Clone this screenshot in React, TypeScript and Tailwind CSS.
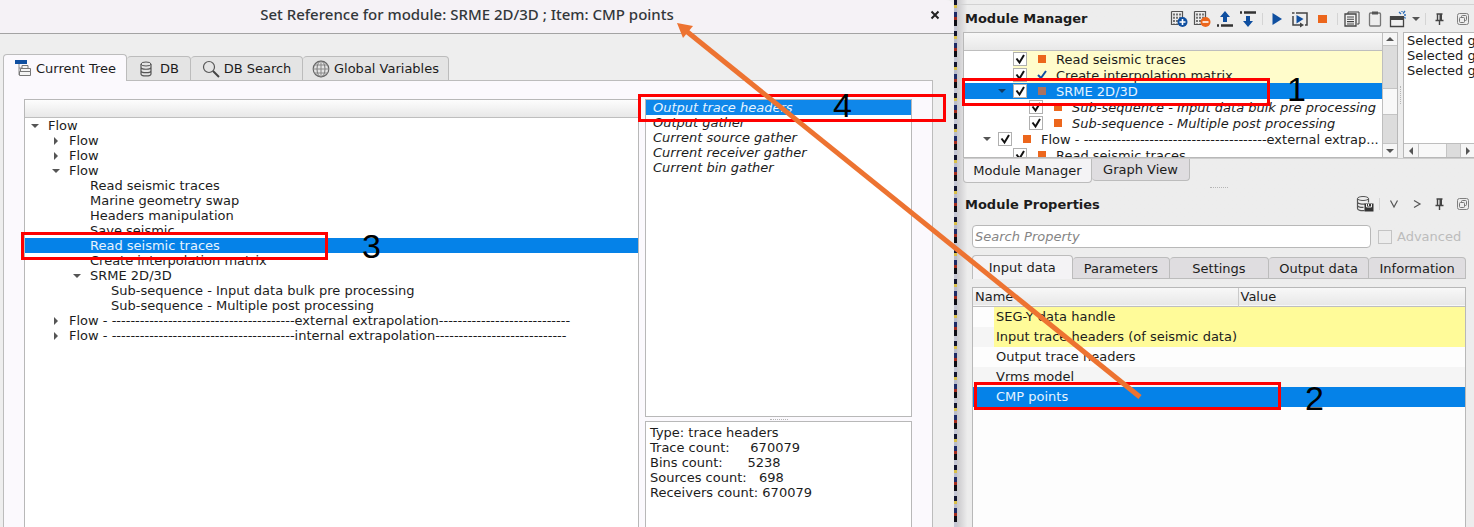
import type { ReactNode } from 'react';
import clsx from 'clsx';

interface TreeRow {
  label: string;
  depth: number;
  arrow?: 'open' | 'closed';
  selected?: boolean;
}

interface ModuleRow {
  label: string;
  depth: number;
  open?: boolean;
  italic?: boolean;
  status?: 'square' | 'check';
  tone?: 'yellow' | 'selected';
}

const EXTERNAL = 'Flow - ' + '-'.repeat(39) + 'external extrapolation' + '-'.repeat(28);
const INTERNAL = 'Flow - ' + '-'.repeat(39) + 'internal extrapolation' + '-'.repeat(28);

const FLOW_ROWS: TreeRow[] = [
  { label: 'Flow', depth: 0, arrow: 'open' },
  { label: 'Flow', depth: 1, arrow: 'closed' },
  { label: 'Flow', depth: 1, arrow: 'closed' },
  { label: 'Flow', depth: 1, arrow: 'open' },
  { label: 'Read seismic traces', depth: 2 },
  { label: 'Marine geometry swap', depth: 2 },
  { label: 'Headers manipulation', depth: 2 },
  { label: 'Save seismic', depth: 2 },
  { label: 'Read seismic traces', depth: 2, selected: true },
  { label: 'Create interpolation matrix', depth: 2 },
  { label: 'SRME 2D/3D', depth: 2, arrow: 'open' },
  { label: 'Sub-sequence - Input data bulk pre processing', depth: 3 },
  { label: 'Sub-sequence - Multiple post processing', depth: 3 },
  { label: EXTERNAL, depth: 1, arrow: 'closed' },
  { label: INTERNAL, depth: 1, arrow: 'closed' },
];

const OUTPUTS = [
  'Output trace headers',
  'Output gather',
  'Current source gather',
  'Current receiver gather',
  'Current bin gather',
];

const MODULE_ROWS: ModuleRow[] = [
  { label: 'Read seismic traces', depth: 1, tone: 'yellow' },
  { label: 'Create interpolation matrix', depth: 1, tone: 'yellow', status: 'check' },
  { label: 'SRME 2D/3D', depth: 1, open: true, tone: 'selected' },
  { label: 'Sub-sequence - Input data bulk pre processing', depth: 2, italic: true },
  { label: 'Sub-sequence - Multiple post processing', depth: 2, italic: true },
  { label: 'Flow - ' + '-'.repeat(39) + 'external extrap...', depth: 0, open: true },
  { label: 'Read seismic traces', depth: 1 },
];

const PROPERTIES = [
  { name: 'SEG-Y data handle', row: 'bg-[#fdfdfd]', cell: 'bg-[#fffb99]' },
  { name: 'Input trace headers (of seismic data)', row: 'bg-[#f5f5f5]', cell: 'bg-[#fffb99]' },
  { name: 'Output trace headers', row: 'bg-[#fdfdfd]', cell: '' },
  { name: 'Vrms model', row: 'bg-[#f5f5f5]', cell: '' },
  { name: 'CMP points', row: 'bg-[#0582e8] text-[#e6f4ff]', cell: '' },
];

const FLOW_INDENT = ['pl-1', 'pl-[25px]', 'pl-[46px]', 'pl-[67px]'];
const MODULE_INDENT = ['w-[15px]', 'w-[30px]', 'w-[46px]'];

function Arrow({ dir, className }: { dir: 'up' | 'down' | 'left' | 'right'; className?: string }) {
  const points = {
    up: '1,7 9,7 5,3',
    down: '1,3 9,3 5,7',
    left: '7,1 7,9 3,5',
    right: '3,1 3,9 7,5',
  }[dir];
  return (
    <svg viewBox="0 0 10 10" className={clsx('w-[10px] h-[10px] shrink-0', className || 'fill-[#555]')}>
      <polygon points={points} />
    </svg>
  );
}

function Icon({ children, size = 'w-[18px] h-[18px]' }: { children: ReactNode; size?: string }) {
  return (
    <svg viewBox="0 0 18 18" className={clsx('shrink-0', size)} fill="none">
      {children}
    </svg>
  );
}

function ToolButton({ label, children }: { label: string; children: ReactNode }) {
  return (
    <button type="button" aria-label={label} className="w-[23px] h-6 flex items-center justify-center">
      {children}
    </button>
  );
}

function Separator() {
  return (
    <span className="w-[6px] flex justify-center">
      <span className="w-px h-3 bg-[#d4d4d4]" />
    </span>
  );
}

function Grip({ vertical }: { vertical?: boolean }) {
  return (
    <span
      className={
        vertical
          ? 'h-[18px] border-l border-dotted border-[#b5b5b5]'
          : 'w-[18px] border-t border-dotted border-[#b5b5b5]'
      }
    />
  );
}

function ModuleGrid() {
  return (
    <>
      <path d="M1.500 1.500h11v8M1.500 1.500v13h7" stroke="#555" strokeWidth="1.200" />
      <path d="M4 3.500v10M7 3.500v10M10 3.500v5" stroke="#555" strokeWidth="1.600" strokeDasharray="2 1.200" />
    </>
  );
}

function PanelButtons() {
  return (
    <>
      <ToolButton label="Pin">
        <Icon>
          <path d="M5.500 4h6M6.500 4v6M4.500 10.500h8M8.500 11v4" stroke="#444" strokeWidth="1.400" />
          <path d="M8.500 4h2.500v6H8.500z" fill="#444" />
        </Icon>
      </ToolButton>
      <ToolButton label="Float">
        <Icon>
          <rect x="3.500" y="3.500" width="11" height="11" rx="2" stroke="#808080" />
          <rect x="7.500" y="5.500" width="5" height="5" rx="1" stroke="#777" />
          <rect x="5.500" y="7.500" width="5" height="5" rx="1" stroke="#777" fill="#ededed" />
        </Icon>
      </ToolButton>
    </>
  );
}

function Highlight({ className }: { className: string }) {
  return <div className={clsx('absolute z-10 h-7 border-3 border-[#fe0000] pointer-events-none', className)} />;
}

function Step({ n, className }: { n: number; className: string }) {
  return (
    <span
      className={clsx(
        "absolute z-10 font-['Liberation_Sans',sans-serif] text-[34px] leading-8 text-black",
        className,
      )}
    >
      {n}
    </span>
  );
}

function DialogTab({ active, icon, label, width }: { active?: boolean; icon: ReactNode; label: string; width: string }) {
  return (
    <button
      type="button"
      role="tab"
      aria-selected={!!active}
      className={clsx(
        'flex items-center justify-center gap-1 border border-[#bcbcbc] rounded-t-sm whitespace-nowrap',
        width,
        active ? 'h-[27px] bg-[#fbf9fd] border-b-0' : 'h-[25px] bg-[#e4e4e4] border-l-0',
      )}
    >
      {icon}
      {label}
    </button>
  );
}

function ReferenceDialog() {
  return (
    <section className="relative flex-1 min-w-0 flex flex-col bg-[#eeeeee] rounded-tr-lg overflow-hidden">
      <header className="flex items-center h-[34px] shrink-0 bg-[#f5f2f6] border-b border-[#a3a3a3] pb-1">
        <h1 className="flex-1 pl-2 text-center font-['Noto_Sans',sans-serif] font-medium text-[15px] text-[#33373a]">
          Set Reference for module: SRME 2D/3D ; Item: CMP points
        </h1>
        <button type="button" aria-label="Close" className="w-6 mr-1 flex items-center">
          <svg viewBox="0 0 10 10" className="w-[10px] h-[10px] ml-1" stroke="#222" strokeWidth="2">
            <path d="M1.500 1.500l7 7M8.500 1.500l-7 7" />
          </svg>
        </button>
      </header>

      <div className="flex-1 min-h-0 flex flex-col pt-5 pl-[3px] pr-[21px]">
        <div role="tablist" className="flex items-end shrink-0 z-1 -mb-px">
          <DialogTab
            active
            width="w-[124px]"
            label="Current Tree"
            icon={
              <Icon>
                <path d="M1 1h12v4H1z" fill="#0f4fa0" />
                <path d="M5 5v11M5 9h3M5 15h3" stroke="#888" />
                <path d="M8 6.500h6v3H8zM6.500 9.500h10v3h-10zM5.500 12.500h11v4h-11z" stroke="#777" fill="#f4f4f4" />
              </Icon>
            }
          />
          <DialogTab
            width="w-[64px]"
            label="DB"
            icon={
              <Icon>
                <ellipse cx="8" cy="4" rx="5" ry="2" stroke="#555" />
                <path
                  d="M3 4v10c0 2.600 10 2.600 10 0V4M3 7.300c0 2.600 10 2.600 10 0M3 10.700c0 2.600 10 2.600 10 0"
                  stroke="#555"
                  strokeWidth="1.200"
                />
              </Icon>
            }
          />
          <DialogTab
            width="w-[112px]"
            label="DB Search"
            icon={
              <Icon>
                <circle cx="7" cy="7" r="5.500" stroke="#555" strokeWidth="1.200" />
                <path d="M11 11l6 6" stroke="#444" strokeWidth="2" />
              </Icon>
            }
          />
          <DialogTab
            width="w-[146px]"
            label="Global Variables"
            icon={
              <Icon>
                <circle cx="9" cy="9" r="7.800" stroke="#666" strokeWidth="1.200" />
                <ellipse cx="9" cy="9" rx="4" ry="7.800" stroke="#777" />
                <path d="M9 1v16M1 9h16M2.500 5h13M2.500 13h13" stroke="#888" />
              </Icon>
            }
          />
        </div>

        <div className="flex-1 min-h-0 flex gap-[6px] bg-[#fbf9fd] border border-b-0 border-[#bcbcbc] pt-[18px] px-5">
          <div className="flex-1 min-w-0 bg-white border border-b-0 border-[#b8b8b8]">
            <div className="h-[18px] bg-linear-to-b from-[#fdfdfd] to-[#e8e8e8] border-b border-[#bebebe]" />
            <ul role="tree">
              {FLOW_ROWS.map((row, i) => (
                <li
                  key={i}
                  role="treeitem"
                  aria-selected={!!row.selected}
                  className={clsx(
                    'flex items-center h-[15px] whitespace-nowrap',
                    FLOW_INDENT[row.depth],
                    row.selected && 'bg-[#0582e8] text-[#e6f4ff]',
                  )}
                >
                  <span className="w-[19px] shrink-0 pl-px">
                    {row.arrow && <Arrow dir={row.arrow === 'open' ? 'down' : 'right'} />}
                  </span>
                  {row.label}
                </li>
              ))}
            </ul>
          </div>

          <div className="w-[267px] shrink-0 flex flex-col">
            <ul role="listbox" className="h-[318px] shrink-0 bg-white border border-[#b8b8b8] italic">
              {OUTPUTS.map((name, i) => (
                <li
                  key={name}
                  role="option"
                  aria-selected={i === 0}
                  className={clsx('h-[15px] leading-[15px] pl-[7px]', i === 0 && 'bg-[#0f87ea] text-[#e6f4ff]')}
                >
                  {name}
                </li>
              ))}
            </ul>
            <div className="h-1 shrink-0 flex items-center justify-center">
              <Grip />
            </div>
            <div className="flex-1 bg-white border border-b-0 border-[#b8b8b8] pl-1 pt-[3px] leading-[15px] whitespace-pre">
              <p>Type: trace headers</p>
              <p>{'Trace count:     670079'}</p>
              <p>{'Bins count:      5238'}</p>
              <p>{'Sources count:   698'}</p>
              <p>{'Receivers count: 670079'}</p>
            </div>
          </div>
        </div>
      </div>

      <Highlight className="left-[21px] top-[232px] w-[307px]" />
      <Step n={3} className="left-[362px] top-[230px]" />
      <Highlight className="right-[8px] top-[94px] w-[308px]" />
      <Step n={4} className="right-[102px] top-[89px]" />
    </section>
  );
}

function ModuleTree() {
  return (
    <div className="flex-1 min-w-0 flex bg-white border border-[#b8b8b8]">
      <div className="flex-1 min-w-0 overflow-hidden">
        <div className="h-[18px] bg-linear-to-b from-[#f8f8f8] to-[#e8e8e8] border-b border-[#bebebe]" />
        <ul role="tree">
          {MODULE_ROWS.map((row, i) => (
            <li
              key={i}
              role="treeitem"
              aria-selected={row.tone === 'selected'}
              className={clsx('flex h-4 whitespace-nowrap', row.tone === 'selected' && 'bg-[#0582e8] text-[#e6f4ff]')}
            >
              <span className={clsx('shrink-0', MODULE_INDENT[row.depth])} />
              <span className="w-[19px] shrink-0 flex items-center pl-[3px]">
                {row.open && <Arrow dir="down" className={row.tone === 'selected' ? 'fill-[#113c66]' : ''} />}
              </span>
              <label className={clsx('flex-1 flex items-center', row.tone === 'yellow' && 'bg-[#fffccb]')}>
                <span className="relative w-[14px] h-[14px] shrink-0">
                  <input
                    type="checkbox"
                    defaultChecked
                    className="peer appearance-none block w-[14px] h-[14px] bg-white border border-[#b0b0b0]"
                  />
                  <svg
                    viewBox="0 0 14 14"
                    className="absolute inset-0 hidden peer-checked:block pointer-events-none"
                    fill="none"
                    stroke="#111"
                    strokeWidth="2"
                  >
                    <path d="M3.500 6.500l3 4L11 3" />
                  </svg>
                </span>
                <span className="w-[29px] shrink-0 flex items-center pl-[10px]">
                  {row.status === 'check' ? (
                    <svg viewBox="0 0 10 10" className="w-[10px] h-[10px]" fill="none" stroke="#0f4fa0" strokeWidth="2">
                      <path d="M1 5l3 3 5-7" />
                    </svg>
                  ) : (
                    <span
                      className={clsx('w-2 h-2 ml-px', row.tone === 'selected' ? 'bg-[#ab7261]' : 'bg-[#ec661c]')}
                    />
                  )}
                </span>
                <span className={row.italic ? 'italic' : ''}>{row.label}</span>
              </label>
            </li>
          ))}
        </ul>
      </div>
      <div className="w-[15px] shrink-0 flex flex-col bg-[#dcdcdc] border-l border-[#bebebe]">
        <span className="h-[13px] flex items-center justify-center bg-[#f6f6f6] border-b border-[#c4c4c4]">
          <Arrow dir="up" />
        </span>
        <span className="mt-[42px] h-[27px] bg-[#f8f8f8] border-y border-[#c4c4c4]" />
        <span className="mt-auto h-[14px] flex items-center justify-center bg-[#f6f6f6] border-t border-[#c4c4c4]">
          <Arrow dir="down" />
        </span>
      </div>
    </div>
  );
}

function ManagerToolbar() {
  return (
    <div className="ml-auto flex items-center">
      <ToolButton label="Add module">
        <Icon>
          <ModuleGrid />
          <circle cx="12.500" cy="12" r="5" fill="#0f4fa0" />
          <path d="M9.500 12h6M12.500 9v6" stroke="#fff" strokeWidth="1.600" />
        </Icon>
      </ToolButton>
      <ToolButton label="Remove module">
        <Icon>
          <ModuleGrid />
          <circle cx="12.500" cy="12" r="5" fill="#ec661c" />
          <path d="M9.500 12h6" stroke="#fff" strokeWidth="1.600" />
        </Icon>
      </ToolButton>
      <ToolButton label="Move up">
        <Icon>
          <path d="M9 1l5 6h-3v5H7V7H4z" fill="#0f4fa0" />
          <path d="M1 15.500h2M5 15.500h12" stroke="#333" strokeWidth="2.500" />
        </Icon>
      </ToolButton>
      <ToolButton label="Move down">
        <Icon>
          <path d="M9 17l5-6h-3V6H7v5H4z" fill="#0f4fa0" />
          <path d="M1 2.500h2M5 2.500h12" stroke="#333" strokeWidth="2.500" />
        </Icon>
      </ToolButton>
      <Separator />
      <ToolButton label="Run">
        <Icon>
          <path d="M4.500 3l9.500 6-9.500 6z" fill="#0f4fa0" />
        </Icon>
      </ToolButton>
      <ToolButton label="Run flow">
        <Icon>
          <path d="M1 3h2.500M5 3h11v12h-2M2 6v9h8" stroke="#444" strokeWidth="1.500" />
          <path d="M5.500 5l7 4-7 4.500z" fill="#0f4fa0" />
          <path d="M9 12.500l4 2.500-4 2.500z" fill="#444" />
        </Icon>
      </ToolButton>
      <ToolButton label="Stop">
        <span className="w-[9px] h-2 bg-[#ec661c]" />
      </ToolButton>
      <Separator />
      <ToolButton label="Copy">
        <Icon>
          <path d="M5 4V2h11v12h-2" stroke="#444" />
          <path d="M2 4h11v12H2z" stroke="#444" fill="#f1f1f1" strokeWidth="1.300" />
          <path d="M4 7h7M4 9.300h7M4 11.600h7M4 14h7" stroke="#444" strokeWidth="1.100" />
        </Icon>
      </ToolButton>
      <ToolButton label="Paste">
        <Icon>
          <rect x="3.500" y="3" width="11" height="13" rx="1" stroke="#777" strokeWidth="1.300" />
          <path d="M6 1.500h6v3H6z" fill="#555" />
        </Icon>
      </ToolButton>
      <ToolButton label="New window">
        <Icon>
          <path d="M1.500 7h13v9.500h-13z" stroke="#444" fill="#f1f1f1" strokeWidth="1.300" />
          <path d="M1 6h14v4H1z" fill="#444" />
          <path d="M10 2l2 2M16 1l-2 2.500M13 1v1M15 5h2M15.500 7l1 1.500" stroke="#2b6cb8" strokeWidth="1.300" />
        </Icon>
      </ToolButton>
      <button type="button" aria-label="More" className="w-[13px] h-6 flex items-center justify-center">
        <Arrow dir="down" />
      </button>
      <Separator />
      <PanelButtons />
    </div>
  );
}

const PROPERTY_TABS = [
  { label: 'Input data', width: 'flex-[100]' },
  { label: 'Parameters', width: 'flex-[98]' },
  { label: 'Settings', width: 'flex-[99]' },
  { label: 'Output data', width: 'flex-[101]' },
  { label: 'Information', width: 'flex-[97]' },
];

function ModulePanels() {
  return (
    <section className="relative w-[517px] shrink-0 flex flex-col bg-linear-to-r from-[#c9c8cb] via-[#ededed] via-2% to-[#ededed]">
      <div className="h-[5px] shrink-0 border-b border-[#d2d2d2]" />

      <div className="flex items-center h-[27px] shrink-0 pl-2">
        <h2 className="font-bold">Module Manager</h2>
        <ManagerToolbar />
      </div>
      <div className="flex h-[126px] shrink-0 pl-[6px]">
        <ModuleTree />
        <div className="w-[5px] flex items-center justify-center">
          <Grip vertical />
        </div>
        <div className="w-[71px] shrink-0 flex flex-col bg-white border border-r-0 border-[#b8b8b8] overflow-hidden">
          <div className="flex-1 pl-[3px] leading-[15px] whitespace-nowrap">
            <p>Selected ga</p>
            <p>Selected ga</p>
            <p>Selected ga</p>
          </div>
          <div className="h-[14px] flex bg-[#dcdcdc] border-t border-[#bebebe]">
            <span className="w-[14px] flex items-center justify-center bg-[#f6f6f6]">
              <Arrow dir="left" />
            </span>
            <span className="w-[29px] bg-[#f8f8f8] border-x border-[#c4c4c4]" />
            <span className="ml-auto w-[14px] flex items-center justify-center bg-[#f6f6f6] border-l border-[#c4c4c4]">
              <Arrow dir="right" />
            </span>
          </div>
        </div>
      </div>
      <div role="tablist" className="flex items-start h-6 shrink-0 ml-[6px] border-t border-[#cdcdcd]">
        <button
          type="button"
          role="tab"
          aria-selected
          className="w-[129px] h-6 bg-[#f4f3f5] border border-t-0 border-[#bcbcbc] rounded-b-sm"
        >
          Module Manager
        </button>
        <button
          type="button"
          role="tab"
          aria-selected={false}
          className="w-[98px] h-[22px] bg-[#dfdde0] border border-t-0 border-l-0 border-[#bcbcbc] rounded-b-sm"
        >
          Graph View
        </button>
      </div>
      <div className="h-[10px] shrink-0 pl-[6px] flex items-center justify-center">
        <Grip />
      </div>

      <div className="flex items-center h-6 shrink-0 pl-2">
        <h2 className="font-bold">Module Properties</h2>
        <div className="ml-auto flex items-center">
          <ToolButton label="Save to database">
            <Icon>
              <ellipse cx="7" cy="3.500" rx="5.500" ry="2" stroke="#555" />
              <path
                d="M1.500 3.500v10c0 2 4 2.500 7 2M12.500 3.500v4M1.500 7c0 2 5 2.500 8 2M1.500 10.300c0 2 4 2.300 6 2"
                stroke="#555"
                strokeWidth="1.200"
              />
              <path d="M8.500 8.500h9v8h-9z" fill="#333" />
              <path d="M10.500 9v3h5V9M12.500 9v2" stroke="#eee" />
            </Icon>
          </ToolButton>
          <Separator />
          <ToolButton label="Collapse">
            <Icon>
              <path d="M5.500 5.500L9 12l3.500-6.500" stroke="#555" strokeWidth="1.200" />
            </Icon>
          </ToolButton>
          <ToolButton label="Next">
            <Icon>
              <path d="M6 5.500L12 9l-6 3.500" stroke="#555" strokeWidth="1.200" />
            </Icon>
          </ToolButton>
          <PanelButtons />
        </div>
      </div>

      <div className="flex-1 min-h-0 flex flex-col pt-[9px] pl-[15px] pr-2">
        <div className="flex items-center shrink-0">
          <input
            type="text"
            aria-label="Search Property"
            placeholder="Search Property"
            className="flex-1 min-w-0 h-[23px] px-[2px] bg-white border border-[#b8b8b8] rounded-sm placeholder:italic placeholder:text-[#858585]"
          />
          <label className="w-[95px] flex items-center gap-[5px] pl-[7px] text-[#bcbcbc]">
            <input type="checkbox" disabled className="appearance-none w-[14px] h-[14px] border border-[#c4c4c4]" />
            Advanced
          </label>
        </div>

        <div role="tablist" className="flex items-end h-6 shrink-0 mt-[7px]">
          {PROPERTY_TABS.map((tab, i) => (
            <button
              key={tab.label}
              type="button"
              role="tab"
              aria-selected={i === 0}
              className={clsx(
                'border border-[#bcbcbc] rounded-t-sm whitespace-nowrap',
                tab.width,
                i === 0 ? 'h-6 bg-[#f4f3f5] border-b-0' : 'h-[22px] bg-[#dfdde0] border-l-0',
              )}
            >
              {tab.label}
            </button>
          ))}
        </div>

        <div className="flex-1 mt-2 bg-[#fdfdfd] border border-b-0 border-[#b8b8b8]">
          <table className="w-full table-fixed border-collapse text-left">
            <colgroup>
              <col className="w-[21px]" />
              <col />
              <col className="w-[227px]" />
            </colgroup>
            <thead>
              <tr className="h-[18px] bg-linear-to-b from-[#f8f8f8] to-[#e8e8e8] border-b border-[#bebebe]">
                <th colSpan={2} className="p-0 pl-[2px] font-normal leading-[17px] border-r border-[#cacaca]">
                  Name
                </th>
                <th className="p-0 pl-[2px] font-normal leading-[17px]">Value</th>
              </tr>
            </thead>
            <tbody>
              {PROPERTIES.map(prop => (
                <tr key={prop.name} className={clsx('h-5', prop.row)}>
                  <td className="p-0" />
                  <td className={clsx('p-0 pl-[2px] leading-5 whitespace-nowrap', prop.cell)}>{prop.name}</td>
                  <td className={clsx('p-0', prop.cell)} />
                </tr>
              ))}
            </tbody>
          </table>
        </div>
      </div>

      <Highlight className="right-[204px] top-[78px] w-[308px]" />
      <Step n={1} className="right-[168px] top-[73px]" />
      <Highlight className="right-[193px] top-[382px] w-[307px]" />
      <Step n={2} className="right-[150px] top-[382px]" />
    </section>
  );
}

export default function App() {
  return (
    <main className="relative flex h-screen overflow-hidden bg-[#ededed] font-['DejaVu_Sans',sans-serif] text-[13px] leading-[15px] text-[#1c1c1c]">
      <ReferenceDialog />
      {/* sliver of the seismic section showing between the windows */}
      <div className="w-[3px] shrink-0 bg-[repeating-linear-gradient(180deg,#11142e_0_5px,#d9c04a_5px_8px,#b9bccb_8px_12px,#1d2a66_12px_17px,#a32a1c_17px_20px,#0c0c14_20px_26px,#c4c6d4_26px_31px)]" />
      <ModulePanels />

      {/* arrow from the CMP points property to the dialog title */}
      <svg
        viewBox="0 0 474 386"
        className="absolute z-20 right-[327px] top-[18px] w-[474px] h-[386px] pointer-events-none"
      >
        <path d="M12 12L467 379" stroke="#ed7331" strokeWidth="5" />
        <polygon points="4,5 20,8 10,20" fill="#ed7331" />
      </svg>
    </main>
  );
}
